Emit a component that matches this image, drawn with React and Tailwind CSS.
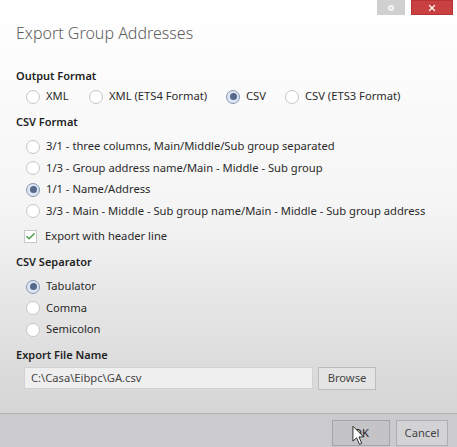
import { Check, X } from 'lucide-react';

function Radio({ label, checked }) {
  return (
    <label className="flex items-center gap-[6px] h-[21.5px]">
      {checked ? (
        <span className="w-[14px] h-[14px] rounded-full border border-[#8797b0] bg-[#dce6f4] flex items-center justify-center shrink-0">
          <span className="w-[7px] h-[7px] rounded-full bg-[#56698a]" />
        </span>
      ) : (
        <span className="w-[14px] h-[14px] rounded-full border border-[#c6c6c6] bg-white shrink-0" />
      )}
      <span className="whitespace-nowrap">{label}</span>
    </label>
  );
}

function Section({ title, children, className = '' }) {
  return (
    <div className={className}>
      <div className="font-semibold text-[#1e1e1e] text-[11px] h-[20px] flex items-center">{title}</div>
      {children}
    </div>
  );
}

export default function App() {
  return (
    <div
      className="relative w-[457px] h-[447px] flex flex-col overflow-hidden text-[11.2px] text-[#2a2a2a]"
      style={{ fontFamily: '"Noto Sans", "Segoe UI", sans-serif' }}
    >
      <div className="flex-1 flex flex-col bg-gradient-to-b from-white via-[#f5f5f5] to-[#d5d5d5]">
        {/* title bar buttons */}
        <div className="flex justify-end gap-[6px] pr-[4px]">
          <div className="w-[28px] h-[15px] bg-[#d0d0d0] flex items-center justify-center">
            <span className="w-[6px] h-[6px] rounded-full border-2 border-[#f4f4f4]" />
          </div>
          <div className="w-[42px] h-[15px] bg-[#c8403f] border border-[#b53434] flex items-center justify-center">
            <X size={10} strokeWidth={3} className="text-white" />
          </div>
        </div>

        <div className="pl-[16px]">
          <h1 className="text-[16px] text-[#5e5e5e] mt-[7px] leading-[22px] font-light">
            Export Group Addresses
          </h1>

          <Section title="Output Format" className="mt-[22px]">
            <div className="flex items-center pl-[10px]">
              <div className="w-[63px]"><Radio label="XML" /></div>
              <div className="w-[137px]"><Radio label="XML (ETS4 Format)" /></div>
              <div className="w-[59px]"><Radio label="CSV" checked /></div>
              <Radio label="CSV (ETS3 Format)" />
            </div>
          </Section>

          <Section title="CSV Format" className="mt-[4.5px]">
            <div className="pl-[10px] pt-[4px]">
              <Radio label="3/1 - three columns, Main/Middle/Sub group separated" />
              <Radio label="1/3 - Group address name/Main - Middle - Sub group" />
              <Radio label="1/1 - Name/Address" checked />
              <Radio label="3/3 - Main - Middle - Sub group name/Main - Middle - Sub group address" />
              <div className="flex items-center gap-[8px] h-[24px] mt-[2px] -ml-[2px]">
                <span className="w-[13px] h-[13px] border border-[#c8c8c8] bg-white flex items-center justify-center shrink-0">
                  <Check size={11} strokeWidth={3} className="text-[#45a045]" />
                </span>
                <span>Export with header line</span>
              </div>
            </div>
          </Section>

          <Section title="CSV Separator" className="mt-[4px]">
            <div className="pl-[10px] pt-[4px]">
              <Radio label="Tabulator" checked />
              <Radio label="Comma" />
              <Radio label="Semicolon" />
            </div>
          </Section>

          <Section title="Export File Name" className="mt-[5px]">
            <div className="flex items-center gap-[5px] pl-[8px] mt-[1px]">
              <div className="w-[289px] h-[22px] border border-[#d2d2d2] bg-[#efefef] px-[6px] flex items-center text-[#444]">
                C:\Casa\Eibpc\GA.csv
              </div>
              <button className="w-[58px] h-[23px] border border-[#bdbdbd] bg-[#e4e4e4] text-[#444]">
                Browse
              </button>
            </div>
          </Section>
        </div>
      </div>

      <div className="h-[34px] border-t border-[#b2b2b2] bg-[#cbcbce] flex items-start justify-end gap-[6px] pr-[9px] pt-[6px]">
        <button className="w-[58px] h-[26px] border border-[#a5a5a7] bg-[#c4c4c7] text-[#222]">OK</button>
        <button className="w-[52px] h-[26px] border border-[#aeaeb0] bg-[#d3d3d6] text-[#444]">Cancel</button>
      </div>

      {/* mouse pointer over the OK button */}
      <svg className="absolute left-[352px] top-[425px]" width="13" height="21" viewBox="0 0 14 22">
        <path d="M1 1 L1 17 L5 13.5 L8 20.5 L10.5 19.5 L7.5 12.5 L12.5 12.5 Z" fill="#fff" stroke="#222" strokeWidth="1" strokeLinejoin="round" />
      </svg>
    </div>
  );
}
